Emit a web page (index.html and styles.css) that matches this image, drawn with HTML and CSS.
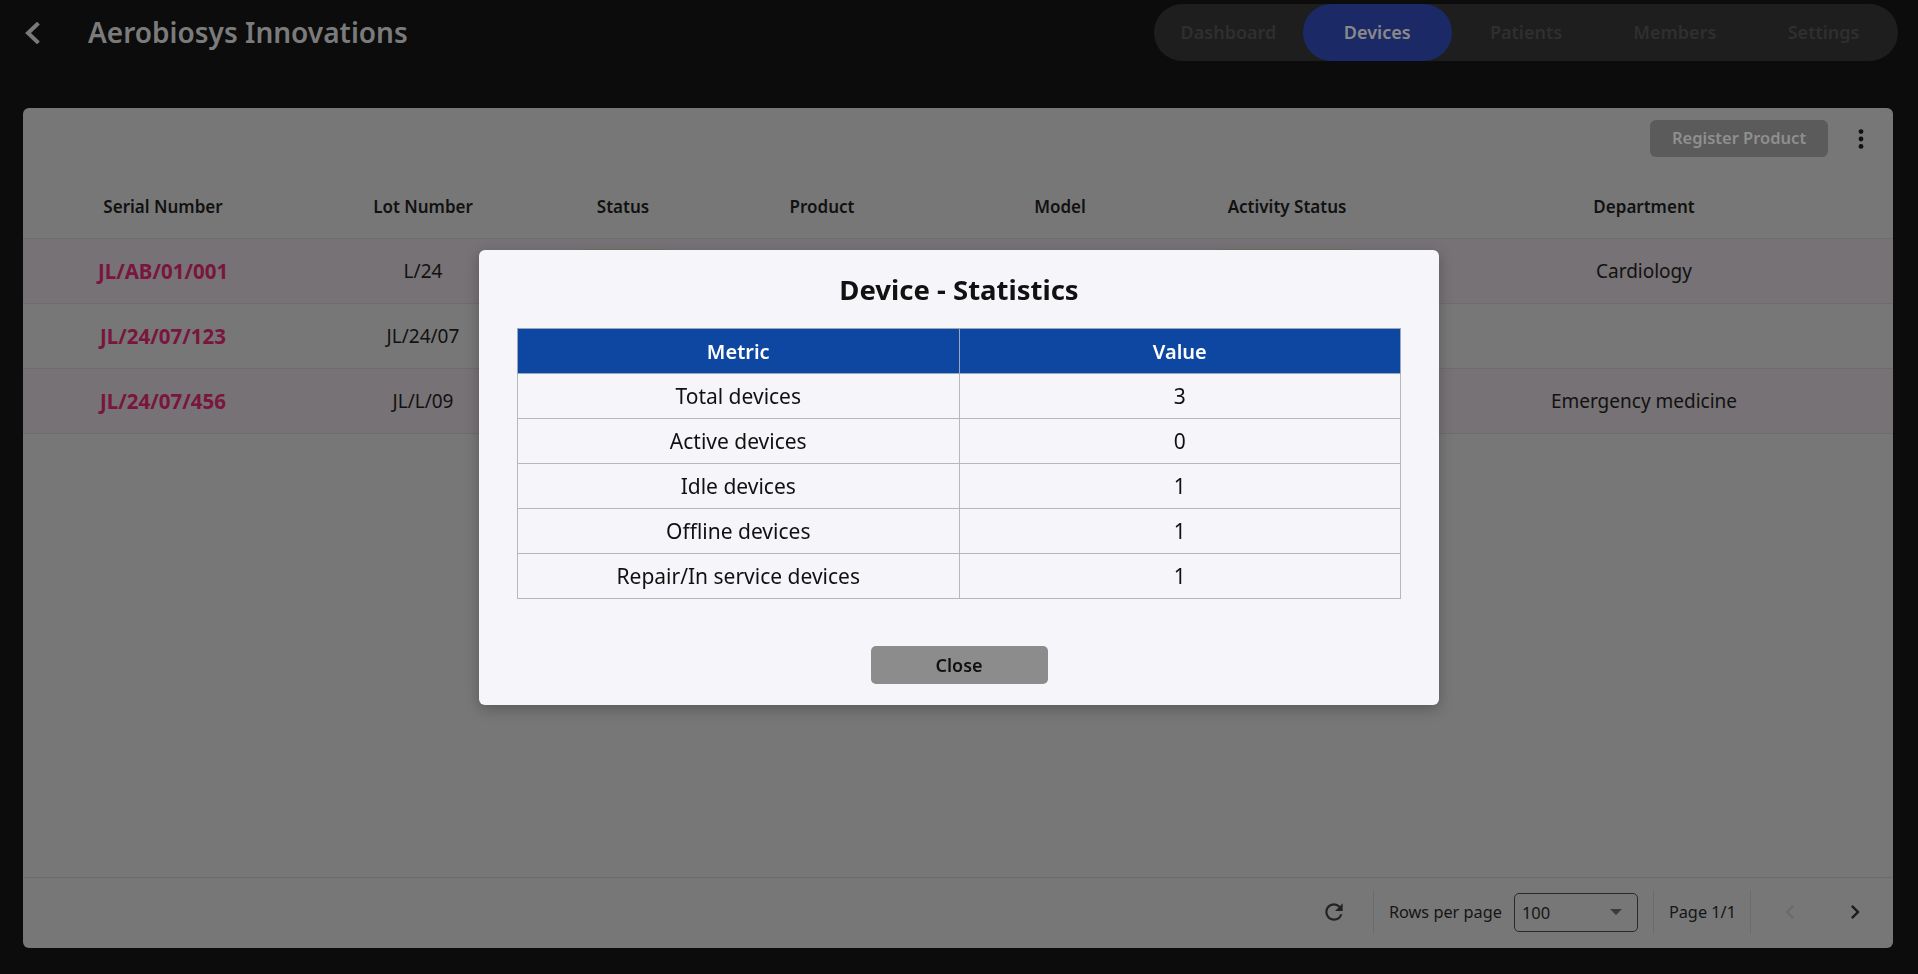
FILE: index.html
```html
<!DOCTYPE html>
<html lang="en">
<head>
<meta charset="utf-8">
<title>Aerobiosys Innovations - Devices</title>
<link rel="stylesheet" href="styles.css">
</head>
<body>
<header class="topbar">
  <button class="back" aria-label="Back">
    <svg width="16" height="22" viewBox="0 0 16 22"><polyline points="13,2.5 4,11 13,19.5" fill="none" stroke="#7a7a7a" stroke-width="4" stroke-linecap="square"/></svg>
  </button>
  <h1 class="brand">Aerobiosys Innovations</h1>
  <nav class="tabs">
    <a class="tab">Dashboard</a>
    <a class="tab active">Devices</a>
    <a class="tab">Patients</a>
    <a class="tab">Members</a>
    <a class="tab">Settings</a>
  </nav>
</header>

<main class="card">
  <div class="toolbar">
    <button class="btn-register">Register Product</button>
    <button class="kebab" aria-label="More">
      <svg width="6" height="20" viewBox="0 0 6 20"><circle cx="3" cy="2.6" r="2.4" fill="#111"/><circle cx="3" cy="10" r="2.4" fill="#111"/><circle cx="3" cy="17.4" r="2.4" fill="#111"/></svg>
    </button>
  </div>

  <div class="grid">
    <div class="row head">
      <div>Serial Number</div><div>Lot Number</div><div>Status</div><div>Product</div><div>Model</div><div>Activity Status</div><div>Department</div>
    </div>
    <div class="row tint">
      <div class="serial">JL/AB/01/001</div><div>L/24</div><div><span class="chip"></span></div><div></div><div></div><div><span class="chip wide"></span></div><div>Cardiology</div>
    </div>
    <div class="row">
      <div class="serial">JL/24/07/123</div><div>JL/24/07</div><div><span class="chip"></span></div><div></div><div></div><div><span class="chip wide"></span></div><div></div>
    </div>
    <div class="row tint">
      <div class="serial">JL/24/07/456</div><div>JL/L/09</div><div><span class="chip"></span></div><div></div><div></div><div><span class="chip wide"></span></div><div>Emergency medicine</div>
    </div>
  </div>

  <footer class="pager">
    <button class="icon-btn refresh" aria-label="Refresh">
      <svg width="26" height="26" viewBox="0 0 24 24"><path fill="#222" d="M17.65 6.35A7.958 7.958 0 0 0 12 4c-4.42 0-7.990 3.58-7.99 8s3.57 8 7.99 8c3.73 0 6.84-2.55 7.730-6h-2.08A5.99 5.99 0 0 1 12 18c-3.31 0-6-2.69-6-6s2.690-6 6-6c1.66 0 3.14.69 4.22 1.78L13 11h7V4l-2.35 2.35z"/></svg>
    </button>
    <span class="sep"></span>
    <span class="label">Rows per page</span>
    <div class="select"><span>100</span><span class="caret"></span></div>
    <span class="sep"></span>
    <span class="label page">Page 1/1</span>
    <span class="sep"></span>
    <button class="icon-btn prev" aria-label="Previous">
      <svg width="28" height="28" viewBox="0 0 24 24"><path fill="#6b6b6b" d="M15.41 7.41 14 6l-6 6 6 6 1.41-1.41L10.83 12z"/></svg>
    </button>
    <button class="icon-btn next" aria-label="Next">
      <svg width="28" height="28" viewBox="0 0 24 24"><path fill="#1c1c1c" d="M10 6 8.59 7.41 13.17 12l-4.58 4.59L10 18l6-6z"/></svg>
    </button>
  </footer>
</main>

<div class="backdrop">
  <section class="modal">
    <h2 class="modal-title">Device - Statistics</h2>
    <table class="stats">
      <thead>
        <tr><th>Metric</th><th>Value</th></tr>
      </thead>
      <tbody>
        <tr><td>Total devices</td><td>3</td></tr>
        <tr><td>Active devices</td><td>0</td></tr>
        <tr><td>Idle devices</td><td>1</td></tr>
        <tr><td>Offline devices</td><td>1</td></tr>
        <tr><td>Repair/In service devices</td><td>1</td></tr>
      </tbody>
    </table>
    <div class="actions"><button class="btn-close">Close</button></div>
  </section>
</div>
</body>
</html>
```

FILE: styles.css
```css
* { box-sizing: border-box; }
html, body { height: 100%; }
body {
  margin: 0;
  background: #0c0c0c;
  font-family: "Noto Sans", "Open Sans", sans-serif;
  color: #111;
  overflow: hidden;
}
button { font-family: inherit; cursor: pointer; }

/* top bar */
.topbar {
  display: flex;
  align-items: center;
  height: 66px;
  padding: 0 20px 0 24px;
}
.back {
  background: none;
  border: 0;
  padding: 0;
  width: 16px;
  height: 22px;
  display: flex;
  margin-right: 48px;
}
.brand {
  margin: 0;
  font-size: 28px;
  font-weight: 600;
  color: #7b7b7b;
  line-height: 1;
  position: relative;
  top: -1px;
}
.tabs {
  margin-left: auto;
  align-self: flex-start;
  margin-top: 4px;
  display: flex;
  height: 57px;
  background: #1e1e1e;
  border-radius: 29px;
}
.tab {
  width: 148.8px;
  display: flex;
  align-items: center;
  justify-content: center;
  padding-bottom: 2px;
  font-size: 18px;
  font-weight: 600;
  color: #2f2f2f;
  border-radius: 29px;
}
.tab.active {
  background: #1b2a66;
  color: #8a8a8a;
}

/* card */
.card {
  margin: 42px 25px 0 23px;
  height: 840px;
  background: #777777;
  border-radius: 6px;
  display: flex;
  flex-direction: column;
  overflow: hidden;
}
.toolbar {
  height: 67px;
  display: flex;
  justify-content: flex-end;
  align-items: flex-start;
  padding: 12px 20px 0 0;
  gap: 21px;
}
.btn-register {
  width: 178px;
  height: 37px;
  border: 0;
  border-radius: 6px;
  background: #5b5b5b;
  color: #8f8f8f;
  font-size: 16.5px;
  font-weight: 600;
  padding-bottom: 3px;
}
.kebab {
  width: 24px;
  height: 37px;
  background: none;
  border: 0;
  padding: 0;
  display: flex;
  align-items: center;
  justify-content: center;
}

.grid { display: flex; flex-direction: column; }
.row {
  display: grid;
  grid-template-columns: 280px 240px 160px 238px 238px 216px 1fr;
  align-items: center;
  height: 65px;
  border-bottom: 1px solid #6d6d6d;
  font-size: 19px;
  text-align: center;
  color: #111;
}
.row.head {
  height: 64px;
  font-size: 17px;
  font-weight: 600;
}
.row.tint { background: #767275; }
.serial {
  color: #7a153d;
  font-weight: 700;
  font-size: 20.5px;
}
.chip {
  display: inline-block;
  vertical-align: middle;
  width: 91px;
  height: 45px;
  border-radius: 6px;
  background: #667866;
}
.chip.wide { width: 142px; }

/* pager */
.pager {
  margin-top: auto;
  height: 71px;
  border-top: 1px solid #6c6c6c;
  display: flex;
  justify-content: flex-end;
  align-items: center;
  padding-right: 18px;
  padding-bottom: 2px;
}
.icon-btn {
  width: 40px;
  height: 40px;
  border: 0;
  background: none;
  padding: 0;
  display: flex;
  align-items: center;
  justify-content: center;
}
.refresh { margin-right: 19px; }
.prev { margin-left: 19px; margin-right: 25px; }
.sep {
  width: 1px;
  height: 44px;
  background: #6c6c6c;
}
.label {
  font-size: 16.3px;
  color: #151515;
  margin-left: 15px;
  margin-right: 12px;
}
.label.page { margin-right: 14px; }
.select {
  width: 124px;
  height: 39px;
  border: 1px solid #2a2a2a;
  border-radius: 5px;
  display: flex;
  align-items: center;
  justify-content: space-between;
  padding: 0 15px 0 7px;
  font-size: 16.5px;
  color: #151515;
  margin-right: 15px;
}
.caret {
  width: 0;
  height: 0;
  border-left: 6px solid transparent;
  border-right: 6px solid transparent;
  border-top: 6px solid #3a3a3a;
}

/* modal */
.backdrop {
  position: fixed;
  inset: 0;
  display: flex;
  justify-content: center;
  align-items: flex-start;
  padding-top: 250px;
}
.modal {
  width: 960px;
  background: #f6f6fa;
  border-radius: 6px;
  padding: 22px 38px 21px;
  box-shadow: 0 4px 14px rgba(0, 0, 0, 0.25);
}
.modal-title {
  margin: 0;
  text-align: center;
  font-size: 27.5px;
  font-weight: 700;
  line-height: 36px;
  color: #111;
}
.stats {
  margin-top: 20px;
  width: 884px;
  border-collapse: collapse;
  table-layout: fixed;
}
.stats th, .stats td {
  border: 1px solid #b8b8b8;
  height: 45px;
  padding: 0;
  text-align: center;
  font-size: 21px;
}
.stats th {
  background: #0d47a1;
  color: #fff;
  font-size: 20px;
  font-weight: 600;
  border-color: #9aa6bb;
}
.stats td { color: #111; font-weight: 400; }
.actions {
  display: flex;
  justify-content: center;
  margin-top: 47px;
}
.btn-close {
  width: 177px;
  height: 38px;
  border: 0;
  border-radius: 5px;
  background: #8c8c8c;
  color: #111;
  font-size: 18px;
  font-weight: 600;
}
```
